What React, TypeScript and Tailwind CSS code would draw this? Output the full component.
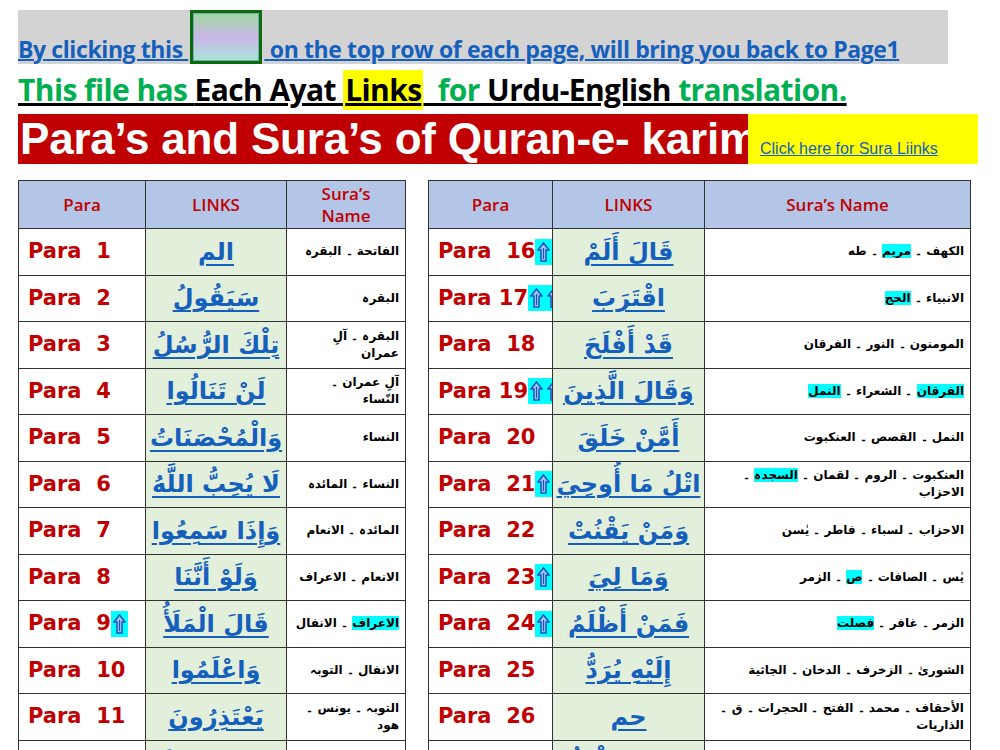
import React from "react";

const Up = () => (
  <span className="inline-flex items-center justify-center bg-[#00ffff] w-[17px] h-[26px] align-middle">
    <svg width="13" height="20" viewBox="0 0 13 20">
      <path d="M6.5 1 L12 8 H9 V19 H4 V8 H1 Z" fill="#9cc8f8" stroke="#1f4fc0" strokeWidth="1.5" />
      <path d="M6.5 6 V17" stroke="#1f4fc0" strokeWidth="1.2" />
    </svg>
  </span>
);

const HL = ({ children }: { children: React.ReactNode }) => <span className="bg-[#00ffff]">{children}</span>;

type Row = { n: string; ups?: number; link: string; sura: React.ReactNode };

const left: Row[] = [
  { n: "  1", link: "الم", sura: "الفاتحة ۔ البقرہ" },
  { n: "  2", link: "سَيَقُولُ", sura: "البقرہ" },
  { n: "  3", link: "تِلْكَ الرُّسُلُ", sura: "البقرہ ۔ آلِ عمران" },
  { n: "  4", link: "لَنْ تَنَالُوا", sura: "آلِ عمران ۔ النّساء" },
  { n: "  5", link: "وَالْمُحْصَنَاتُ", sura: "النساء" },
  { n: "  6", link: "لَا يُحِبُّ اللَّهُ", sura: "النساء ۔ المائدہ" },
  { n: "  7", link: "وَإِذَا سَمِعُوا", sura: "المائدہ ۔ الانعام" },
  { n: "  8", link: "وَلَوْ أَنَّنَا", sura: "الانعام ۔ الاعراف" },
  { n: "  9", ups: 1, link: "قَالَ الْمَلَأُ", sura: <><HL>الاعراف</HL> ۔ الانفال</> },
  { n: "  10", link: "وَاعْلَمُوا", sura: "الانفال ۔ التوبہ" },
  { n: "  11", link: "يَعْتَذِرُونَ", sura: "التوبہ ۔ یونس ۔ هود" },
  { n: "  12", link: "وَمَا مِنْ دَابَّةٍ", sura: "هود ۔ یوسف" },
];
const right: Row[] = [
  { n: "  16", ups: 1, link: "قَالَ أَلَمْ", sura: <>الکھف ۔ <HL>مریم</HL> ۔ طه</> },
  { n: " 17", ups: 2, link: "اقْتَرَبَ", sura: <>الانبیاء ۔ <HL>الحج</HL></> },
  { n: "  18", link: "قَدْ أَفْلَحَ", sura: "المومنون ۔ النور ۔ الفرقان" },
  { n: " 19", ups: 2, link: "وَقَالَ الَّذِينَ", sura: <><HL>الفرقان</HL> ۔ الشعراء ۔ <HL>النمل</HL></> },
  { n: "  20", link: "أَمَّنْ خَلَقَ", sura: "النمل ۔ القصص ۔ العنکبوت" },
  { n: "  21", ups: 1, link: "اتْلُ مَا أُوحِيَ", sura: <>العنکبوت ۔ الروم ۔ لقمان ۔ <HL>السجدہ</HL> ۔ الاحزاب</> },
  { n: "  22", link: "وَمَنْ يَقْنُتْ", sura: "الاحزاب ۔ لسباء ۔ فاطر ۔ یٰسن" },
  { n: "  23", ups: 1, link: "وَمَا لِيَ", sura: <>یٰس ۔ الصافات ۔ <HL>ص</HL> ۔ الزمر</> },
  { n: "  24", ups: 1, link: "فَمَنْ أَظْلَمُ", sura: <>الزمر ۔ غافر ۔ <HL>فصلت</HL></> },
  { n: "  25", link: "إِلَيْهِ يُرَدُّ", sura: "الشوریٰ ۔ الزخرف ۔ الدخان ۔ الجاثیة" },
  { n: "  26", link: "حم", sura: "الأحقاف ۔ محمد ۔ الفتح ۔ الحجرات ۔ ق ۔ الذاريات" },
  { n: "  27", ups: 1, link: "قَالَ فَمَا خَطْبُكُمْ", sura: <>الطور ۔ <HL>النجم</HL> ۔ القمر ۔ الرحمن</> },
];

const arab = { fontFamily: '"DejaVu Sans", "Noto Sans", sans-serif' };
const hdr = { fontFamily: '"Open Sans", "Noto Sans", sans-serif' };

function Table({ rows, widths, suraHeader }: { rows: Row[]; widths: number[]; suraHeader: React.ReactNode }) {
  return (
    <table className="border-collapse table-fixed" style={{ width: widths.reduce((a, b) => a + b, 0) }}>
      <colgroup>
        {widths.map((w, i) => <col key={i} style={{ width: w }} />)}
      </colgroup>
      <thead>
        <tr className="h-[48px] bg-[#b4c6e7] text-[#c00000] text-[17px]" style={hdr}>
          <th className="border border-[#333] font-semibold">Para</th>
          <th className="border border-[#333] font-semibold">LINKS</th>
          <th className="border border-[#333] font-semibold leading-[22px]">{suraHeader}</th>
        </tr>
      </thead>
      <tbody>
        {rows.map((r, i) => (
          <tr key={i} className="h-[46.5px]">
            <td className="border border-[#333] pl-[9px] text-[#c00000] text-[21px] font-bold whitespace-pre overflow-hidden" style={{ fontFamily: '"DejaVu Sans", sans-serif' }}>
              <span className="inline-flex items-center">Para{r.n}{Array.from({ length: r.ups || 0 }).map((_, k) => <Up key={k} />)}</span>
            </td>
            <td className="border border-[#333] bg-[#e2efda] text-center whitespace-nowrap overflow-hidden">
              <span dir="rtl" className="text-[#1560bd] text-[24px] font-bold underline decoration-2 underline-offset-4" style={arab}>{r.link}</span>
            </td>
            <td dir="rtl" className="border border-[#333] px-[6px] text-[12px] font-bold leading-[17px] text-black" style={arab}>
              {r.sura}
            </td>
          </tr>
        ))}
      </tbody>
    </table>
  );
}

export default function App() {
  return (
    <div className="w-[1000px] h-[750px] overflow-hidden bg-white relative">
      <div className="pl-[18px] pt-[10px]">
        <div className="w-[930px] h-[54px] bg-[#d3d3d3] flex items-end overflow-hidden" style={{ fontFamily: '"Open Sans", sans-serif' }}>
          <div className="flex items-end text-[#1560bd] text-[23px] font-bold underline decoration-2 leading-[30px] whitespace-pre tracking-[-0.4px]">
            <span>By clicking this </span>
            <span className="inline-block w-[72px] h-[54px] bg-[#0b6b0b] p-[3px] mx-[2px]">
              <span className="block w-full h-full bg-gradient-to-b from-[#9fd8a0] via-[#c9b6e8] to-[#a9e3d8] border border-[#7ab]"></span>
            </span>
            <span> on the top row of each page, will bring you back to Page1</span>
          </div>
        </div>
        <div className="mt-[4px] h-[42px] flex items-end text-[30px] font-bold leading-[40px] whitespace-pre underline decoration-[3px] tracking-[-0.6px]" style={{ fontFamily: '"Open Sans", sans-serif' }}>
          <span className="text-[#00b050]">This file has </span>
          <span className="text-black">Each Ayat</span>
          <span className="text-[#00b050]"> </span>
          <span className="text-black bg-[#ffff00] px-[2px]">Links</span>
          <span className="text-[#00b050]">  for </span>
          <span className="text-black">Urdu-English</span>
          <span className="text-[#00b050]"> translation.</span>
        </div>
        <div className="mt-[4px] flex items-stretch h-[50px]">
          <div className="w-[730px] bg-[#c00000] text-white text-[44px] font-bold leading-[50px] pl-[2px] whitespace-nowrap overflow-hidden tracking-[-0.2px]" style={{ fontFamily: '"Liberation Sans", Arial, sans-serif' }}>
            Para’s and Sura’s of Quran-e- karim
          </div>
          <div className="w-[230px] bg-[#ffff00] flex items-end pb-[3px] pl-[12px]">
            <span className="text-[#1560bd] underline text-[16px] whitespace-nowrap" style={{ fontFamily: '"Liberation Sans", Arial, sans-serif' }}>Click here for Sura Liinks</span>
          </div>
        </div>
        <div className="mt-[16px] flex gap-[22px] items-start">
          <Table rows={left} widths={[127, 141, 119]} suraHeader={<>Sura’s<br />Name</>} />
          <Table rows={right} widths={[124, 152, 266]} suraHeader="Sura’s Name" />
        </div>
      </div>
    </div>
  );
}
